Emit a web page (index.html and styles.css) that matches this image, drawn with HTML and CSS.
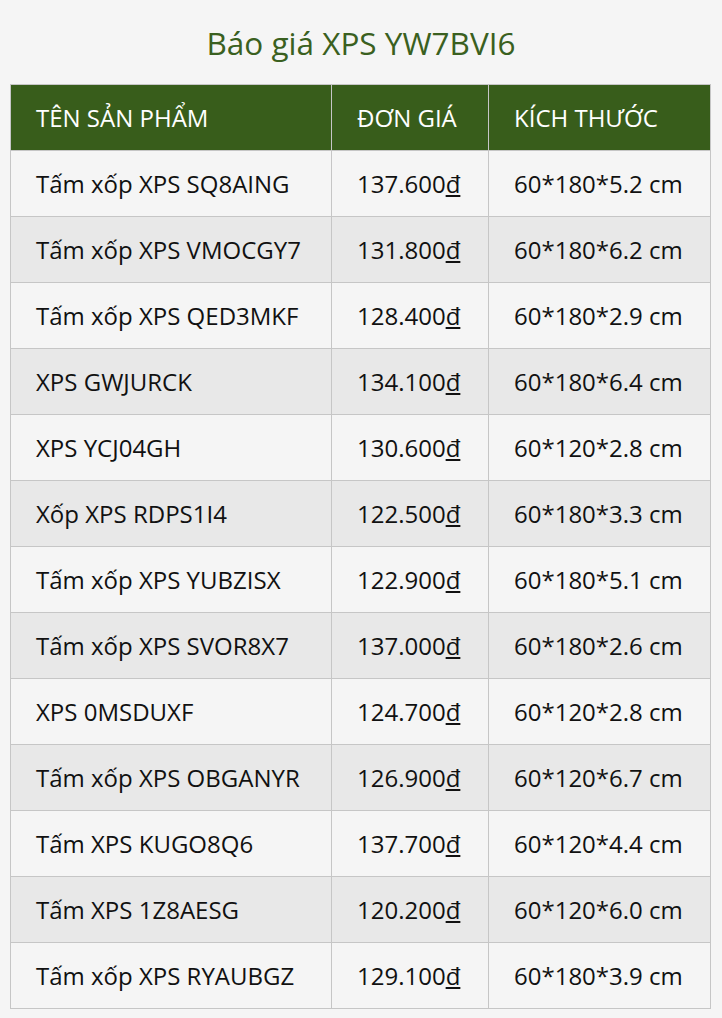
FILE: index.html
```html
<!DOCTYPE html>
<html lang="vi">
<head>
<meta charset="utf-8">
<title>Báo giá XPS YW7BVI6</title>
<link rel="stylesheet" href="styles.css">
</head>
<body>
<div class="page">
  <h1 class="title">Báo giá XPS YW7BVI6</h1>
  <table class="price-table">
    <thead>
      <tr><th class="c-name">TÊN SẢN PHẨM</th><th class="c-price">ĐƠN GIÁ</th><th class="c-size">KÍCH THƯỚC</th></tr>
    </thead>
    <tbody>
      <tr><td>Tấm xốp XPS SQ8AING</td><td>137.600<u>đ</u></td><td>60*180*5.2 cm</td></tr>
      <tr><td>Tấm xốp XPS VMOCGY7</td><td>131.800<u>đ</u></td><td>60*180*6.2 cm</td></tr>
      <tr><td>Tấm xốp XPS QED3MKF</td><td>128.400<u>đ</u></td><td>60*180*2.9 cm</td></tr>
      <tr><td>XPS GWJURCK</td><td>134.100<u>đ</u></td><td>60*180*6.4 cm</td></tr>
      <tr><td>XPS YCJ04GH</td><td>130.600<u>đ</u></td><td>60*120*2.8 cm</td></tr>
      <tr><td>Xốp XPS RDPS1I4</td><td>122.500<u>đ</u></td><td>60*180*3.3 cm</td></tr>
      <tr><td>Tấm xốp XPS YUBZISX</td><td>122.900<u>đ</u></td><td>60*180*5.1 cm</td></tr>
      <tr><td>Tấm xốp XPS SVOR8X7</td><td>137.000<u>đ</u></td><td>60*180*2.6 cm</td></tr>
      <tr><td>XPS 0MSDUXF</td><td>124.700<u>đ</u></td><td>60*120*2.8 cm</td></tr>
      <tr><td>Tấm xốp XPS OBGANYR</td><td>126.900<u>đ</u></td><td>60*120*6.7 cm</td></tr>
      <tr><td>Tấm XPS KUGO8Q6</td><td>137.700<u>đ</u></td><td>60*120*4.4 cm</td></tr>
      <tr><td>Tấm XPS 1Z8AESG</td><td>120.200<u>đ</u></td><td>60*120*6.0 cm</td></tr>
      <tr><td>Tấm xốp XPS RYAUBGZ</td><td>129.100<u>đ</u></td><td>60*180*3.9 cm</td></tr>
    </tbody>
  </table>
</div>
</body>
</html>
```
FILE: styles.css
```css
html, body {
  margin: 0;
  padding: 0;
  background: #f5f5f5;
}
.page {
  padding: 0 10px;
  font-family: "Open Sans", "Noto Sans", sans-serif;
  color: #111;
}
.title {
  margin: 0;
  padding-top: 22px;
  height: 84px;
  box-sizing: border-box;
  text-align: center;
  font-weight: 400;
  font-size: 31.5px;
  line-height: 42px;
  color: #3a6020;
}
.price-table {
  width: 701px;
  border-collapse: collapse;
  font-size: 24px;
}
.price-table th,
.price-table td {
  border: 1px solid #c6c6c6;
  height: 66px;
  padding: 0 0 0 25px;
  text-align: left;
  font-weight: 400;
  box-sizing: border-box;
}
.price-table th {
  background: #385d1b;
  color: #fff;
}
.c-name { width: 321px; }
.c-price { width: 157px; }
.c-size { width: 222px; }
.price-table tbody tr:nth-child(odd) td { background: #f5f5f5; }
.price-table tbody tr:nth-child(even) td { background: #e8e8e8; }
```
